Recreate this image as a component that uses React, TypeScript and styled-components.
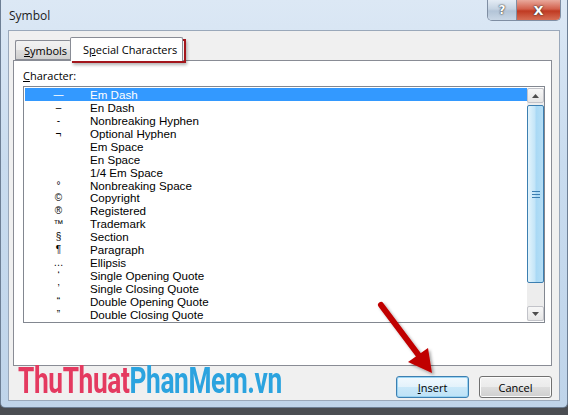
import React from 'react';
import styled, { createGlobalStyle } from 'styled-components';

const GlobalStyle = createGlobalStyle`
  html, body {
    margin: 0;
    padding: 0;
  }
  body {
    width: 568px;
    height: 415px;
    overflow: hidden;
    background: #4a4d52;
    font-family: "Open Sans", "Noto Sans", sans-serif;
    color: #000;
  }
`;

const Window = styled.div`
  position: relative;
  width: 568px;
  height: 408px;
  box-sizing: border-box;
  padding: 0 7px 6px 7px;
  display: flex;
  flex-direction: column;
  background: linear-gradient(180deg, #dce8f5 0%, #c9dcef 40%, #bfd4ea 100%);
  border: 1px solid #6d7f95;
  border-top: none;
  border-radius: 0 0 5px 5px;
`;

const TitleBar = styled.div`
  height: 30px;
  display: flex;
  align-items: flex-start;
`;

const Title = styled.span`
  margin: 7px 0 0 1px;
  font-size: 12px;
  color: #1b1b1b;
`;

const CaptionGroup = styled.div`
  margin-left: auto;
  margin-right: -1px;
  display: flex;
  height: 20px;
  border: 1px solid #7f8ea3;
  border-top: none;
  border-radius: 0 0 5px 5px;
  overflow: hidden;
`;

const CaptionButton = styled.div<{ $close?: boolean }>`
  width: ${({ $close }) => ($close ? '43px' : '28px')};
  display: flex;
  align-items: center;
  justify-content: center;
  font-family: "DejaVu Sans", sans-serif;
  font-weight: bold;
  font-size: ${({ $close }) => ($close ? '13px' : '12px')};
  color: #fff;
  text-shadow: 0 0 2px #333, 0 0 1px #333;
  background: ${({ $close }) =>
    $close
      ? 'linear-gradient(180deg, #e9a99c 0%, #d2604c 45%, #c03a22 55%, #d66e55 100%)'
      : 'linear-gradient(180deg, #e4ecf5 0%, #c5d3e2 45%, #b3c4d7 55%, #c9d7e6 100%)'};
  border-left: ${({ $close }) => ($close ? '1px solid #7f8ea3' : 'none')};
`;

const Client = styled.div`
  flex: 1;
  display: flex;
  flex-direction: column;
  background: #f0f0f0;
  border: 1px solid #9aa8ba;
  padding: 6px 7px 0 4px;
`;

const TabStrip = styled.div`
  display: flex;
  align-items: flex-end;
  height: 23px;
  padding-left: 2px;
  position: relative;
  z-index: 1;
`;

const Tab = styled.div<{ $active?: boolean }>`
  box-sizing: border-box;
  font-size: 11px;
  display: flex;
  align-items: center;
  border: 1px solid #898c95;
  border-radius: 2px 2px 0 0;
  ${({ $active }) =>
    $active
      ? `
    width: 113px;
    height: 24px;
    margin-bottom: -1px;
    padding: 0 0 0 12px;
    background: #fff;
    border-bottom: none;
  `
      : `
    width: 56px;
    height: 20px;
    padding: 0 0 0 8px;
    margin-right: -1px;
    background: linear-gradient(180deg, #f2f2f2 0%, #ebebeb 50%, #dddddd 51%, #cfcfcf 100%);
    border-right: none;
  `}
`;

const U = styled.span`
  text-decoration: underline;
  text-underline-offset: 1px;
`;

const Panel = styled.div`
  height: 306px;
  box-sizing: border-box;
  background: #fff;
  border: 1px solid #898c95;
  padding: 7px 6px 0 9px;
  display: flex;
  flex-direction: column;
`;

const Label = styled.div`
  font-size: 11px;
  line-height: 16px;
  margin-bottom: 2px;
`;

const ListBox = styled.div`
  height: 237px;
  box-sizing: border-box;
  border: 1px solid #828790;
  display: flex;
  padding: 1px 0 1px 1px;
`;

const Rows = styled.div`
  flex: 1;
  display: flex;
  flex-direction: column;
`;

const Row = styled.div<{ $selected?: boolean }>`
  display: flex;
  height: 13px;
  line-height: 13px;
  overflow: hidden;
  align-items: center;
  font-family: "Liberation Sans", Arial, sans-serif;
  font-size: 11.6px;
  white-space: nowrap;
  background: ${({ $selected }) => ($selected ? '#3399ff' : 'transparent')};
  color: ${({ $selected }) => ($selected ? '#fff' : '#000')};
`;

const Glyph = styled.span`
  width: 63px;
  padding-left: 2px;
  text-align: center;
  font-size: 10px;
  line-height: 13px;
`;

const Name = styled.span`
  line-height: 13px;
`;

const ScrollBar = styled.div`
  width: 17px;
  display: flex;
  flex-direction: column;
  background: #ededed;
`;

const ArrowButton = styled.div`
  height: 15px;
  box-sizing: border-box;
  border: 1px solid #c2c3c9;
  border-radius: 2px;
  background: linear-gradient(180deg, #f7f7f7 0%, #e6e6e6 100%);
  display: flex;
  align-items: center;
  justify-content: center;
`;

const Thumb = styled.div`
  height: 178px;
  margin-top: 2px;
  box-sizing: border-box;
  border: 1px solid #3c7fb1;
  border-radius: 2px;
  background: linear-gradient(90deg, #e3f4fc 0%, #c4e5f8 45%, #a9d9f5 55%, #b5dff7 100%);
  display: flex;
  align-items: center;
  justify-content: center;
`;

const Track = styled.div`
  flex: 1;
`;

const Footer = styled.div`
  display: flex;
  align-items: flex-start;
  justify-content: flex-end;
  gap: 10px;
  padding-top: 10px;
`;

const Button = styled.div<{ $default?: boolean }>`
  width: 73px;
  height: 22px;
  box-sizing: border-box;
  display: flex;
  align-items: center;
  justify-content: center;
  font-size: 11px;
  border-radius: 3px;
  border: 1px solid ${({ $default }) => ($default ? '#3c7fb1' : '#707070')};
  box-shadow: ${({ $default }) => ($default ? 'inset 0 0 0 1px #9ad3f2' : 'inset 0 0 0 1px #fcfcfc')};
  background: ${({ $default }) =>
    $default
      ? 'linear-gradient(180deg, #f1f9fe 0%, #e3f2fb 50%, #cae8f9 51%, #bde2f7 100%)'
      : 'linear-gradient(180deg, #f2f2f2 0%, #ebebeb 50%, #dddddd 51%, #cfcfcf 100%)'};
`;

const Highlight = styled.div`
  position: absolute;
  left: 71px;
  top: 39px;
  width: 114px;
  height: 24px;
  box-sizing: border-box;
  border: 2px solid #a3161c;
  box-shadow: 1px 2px 3px rgba(0, 0, 0, 0.3);
`;

const Watermark = styled.div`
  position: absolute;
  left: 17px;
  top: 360px;
  font-family: Roboto, "Liberation Sans", sans-serif;
  font-weight: 700;
  font-size: 36px;
  letter-spacing: -0.5px;
  transform: scaleX(0.73);
  transform-origin: left top;
  white-space: nowrap;
`;

const Pink = styled.span`
  color: #e43a60;
`;

const Blue = styled.span`
  color: #2ba3df;
`;

const ArrowOverlay = styled.svg`
  position: absolute;
  left: 369px;
  top: 295px;
  overflow: visible;
`;

const rows: [string, string][] = [
  ['\u2014', 'Em Dash'],
  ['\u2013', 'En Dash'],
  ['-', 'Nonbreaking Hyphen'],
  ['\u00ac', 'Optional Hyphen'],
  ['', 'Em Space'],
  ['', 'En Space'],
  ['', '1/4 Em Space'],
  ['\u00b0', 'Nonbreaking Space'],
  ['\u00a9', 'Copyright'],
  ['\u00ae', 'Registered'],
  ['\u2122', 'Trademark'],
  ['\u00a7', 'Section'],
  ['\u00b6', 'Paragraph'],
  ['\u2026', 'Ellipsis'],
  ['\u2018', 'Single Opening Quote'],
  ['\u2019', 'Single Closing Quote'],
  ['\u201c', 'Double Opening Quote'],
  ['\u201d', 'Double Closing Quote'],
];

export default function App() {
  return (
    <>
      <GlobalStyle />
      <Window>
        <TitleBar>
          <Title>Symbol</Title>
          <CaptionGroup>
            <CaptionButton>?</CaptionButton>
            <CaptionButton $close>X</CaptionButton>
          </CaptionGroup>
        </TitleBar>
        <Client>
          <TabStrip>
            <Tab>
              <U>S</U>ymbols
            </Tab>
            <Tab $active>
              S<U>p</U>ecial Characters
            </Tab>
          </TabStrip>
          <Panel>
            <Label>
              <U>C</U>haracter:
            </Label>
            <ListBox>
              <Rows>
                {rows.map(([g, n], i) => (
                  <Row key={n} $selected={i === 0}>
                    <Glyph>{g}</Glyph>
                    <Name>{n}</Name>
                  </Row>
                ))}
              </Rows>
              <ScrollBar>
                <ArrowButton>
                  <svg width="7" height="4" viewBox="0 0 7 4">
                    <path d="M0 4 L3.5 0 L7 4 Z" fill="#4d4d4d" />
                  </svg>
                </ArrowButton>
                <Thumb>
                  <svg width="8" height="7" viewBox="0 0 8 7">
                    <path d="M0 0.5 H8 M0 3.5 H8 M0 6.5 H8" stroke="#3c7fb1" strokeWidth="1" />
                  </svg>
                </Thumb>
                <Track />
                <ArrowButton>
                  <svg width="7" height="4" viewBox="0 0 7 4">
                    <path d="M0 0 L3.5 4 L7 0 Z" fill="#4d4d4d" />
                  </svg>
                </ArrowButton>
              </ScrollBar>
            </ListBox>
          </Panel>
          <Footer>
            <Button $default>
              <U>I</U>nsert
            </Button>
            <Button>Cancel</Button>
          </Footer>
        </Client>
        <Highlight />
        <Watermark>
          <Pink>ThuThuat</Pink>
          <Blue>PhanMem.vn</Blue>
        </Watermark>
        <ArrowOverlay width="70" height="85" viewBox="0 0 70 85">
          <defs>
            <filter id="sh" x="-20%" y="-20%" width="140%" height="140%">
              <feDropShadow dx="2" dy="2" stdDeviation="1.5" floodColor="#000" floodOpacity="0.35" />
            </filter>
          </defs>
          <g filter="url(#sh)">
            <path d="M11 10 L50 62" stroke="#c00000" strokeWidth="6" strokeLinecap="round" />
            <path d="M38 67 L58 53 L62 78 Z" fill="#c00000" />
          </g>
        </ArrowOverlay>
      </Window>
    </>
  );
}
